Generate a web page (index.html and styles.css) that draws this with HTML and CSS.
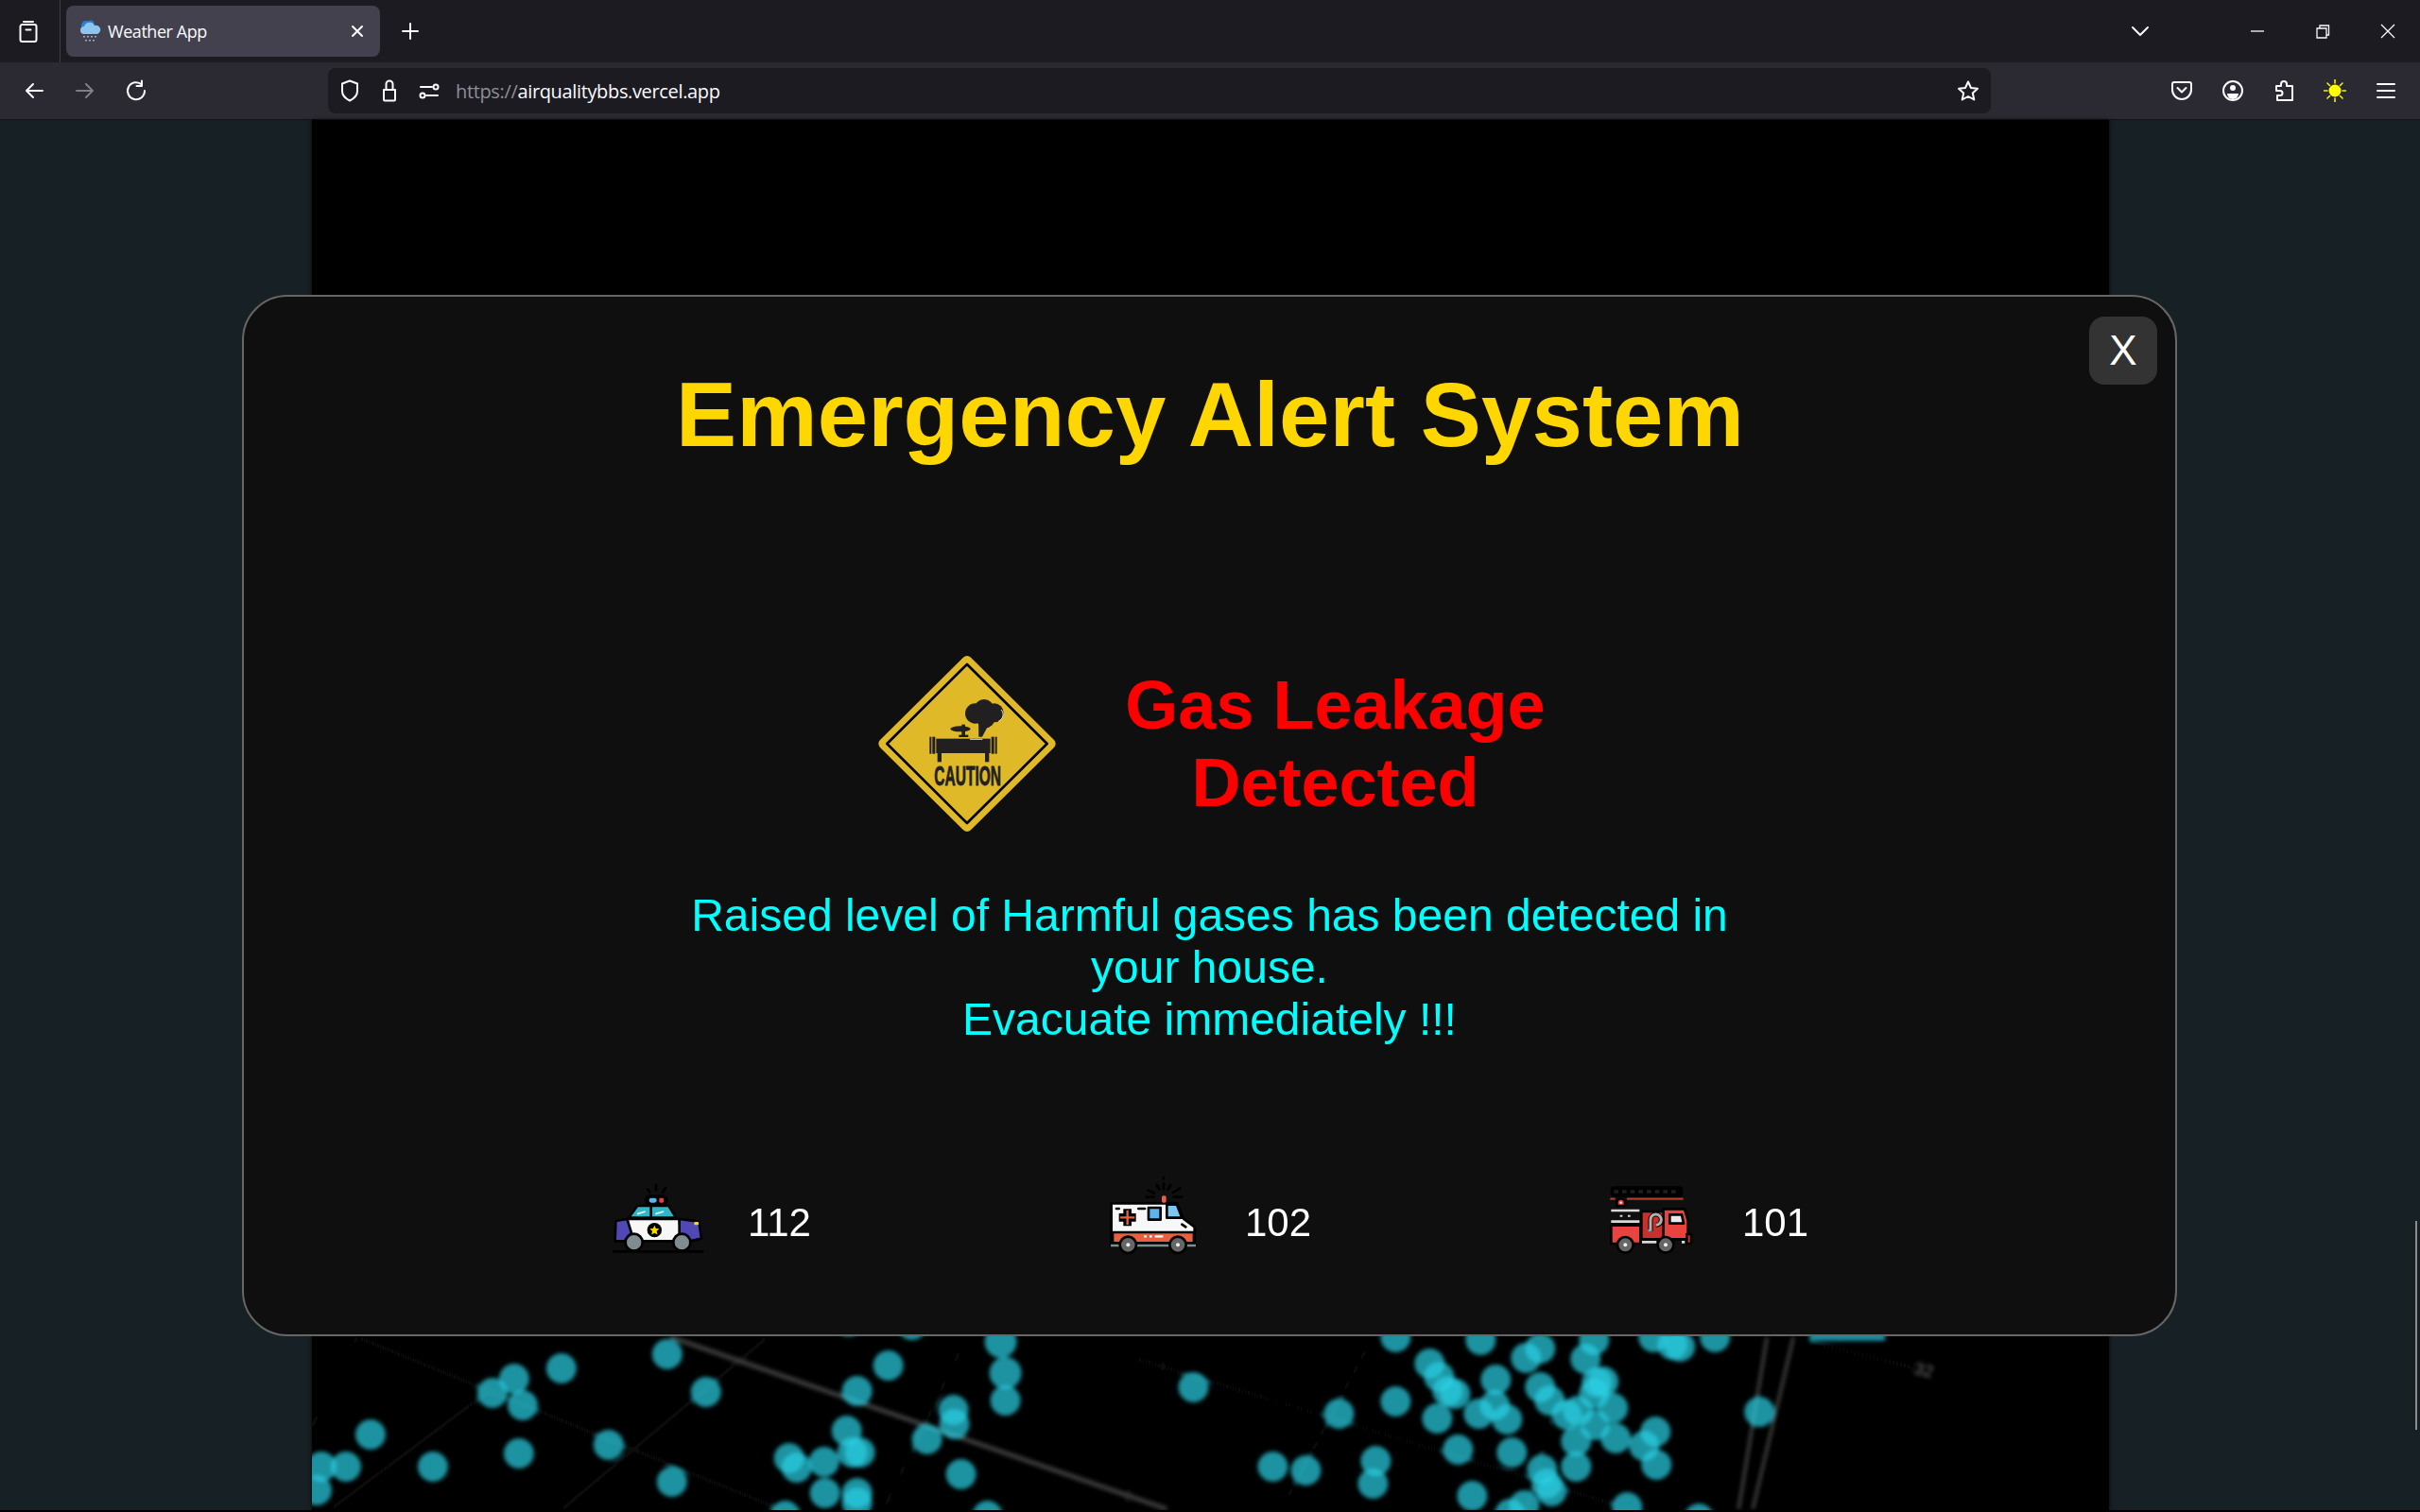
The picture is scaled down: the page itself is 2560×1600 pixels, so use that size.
FILE: index.html
```html
<!DOCTYPE html>
<html lang="en">
<head>
<meta charset="utf-8">
<title>Weather App</title>
<link rel="stylesheet" href="styles.css">
</head>
<body>
<div class="window">
  <header class="tabbar">
    <div class="slot-view">
      <svg class="ic" viewBox="0 0 24 24"><path d="M7 2h10M3.500 7a2 2 0 0 1 2-2h13a2 2 0 0 1 2 2v14a2 2 0 0 1-2 2h-13a2 2 0 0 1-2-2zM9.500 10.500h5"/></svg>
    </div>
    <div class="tab">
      <svg class="favicon" viewBox="0 0 24 24"><circle cx="8" cy="6" r="5" fill="#2b7fd4"/><circle cx="13" cy="4" r="3.500" fill="#2b7fd4"/><path d="M6 15a4 4 0 0 1 0-8 6 6 0 0 1 11-1 4.500 4.500 0 0 1 3 9z" fill="#8cc6ee"/><path d="M6 17v1.500M10 17v1.500M14 17v1.500M18 17v1.500M8 21v1.500M12 21v1.500M16 21v1.500" stroke="#b4d6ec" stroke-width="1.500" fill="none"/></svg>
      <span class="tab-title">Weather App</span>
      <svg class="ic ic-s tab-x" viewBox="0 0 16 16"><path d="M3 3l10 10M13 3L3 13"/></svg>
    </div>
    <div class="slot-plus">
      <svg class="ic ic-plus" viewBox="0 0 20 20"><path d="M10 2v16M2 10h16"/></svg>
    </div>
    <div class="tabbar-right">
      <svg class="ic ic-chev" viewBox="0 0 20 12"><path d="M2 2l8 8 8-8"/></svg>
      <div class="win-btn"><svg class="ic ic-win" viewBox="0 0 16 16"><path d="M1 8h14"/></svg></div>
      <div class="win-btn"><svg class="ic ic-win" viewBox="0 0 16 16"><path d="M2 5h10v10H2zM5 5V2h9.500v10H12"/></svg></div>
      <div class="win-btn"><svg class="ic ic-win" viewBox="0 0 16 16"><path d="M1 1l14 14M15 1L1 15"/></svg></div>
    </div>
  </header>

  <nav class="toolbar">
    <div class="tool"><svg class="ic" viewBox="0 0 24 24"><path d="M21 12H4M11 5l-7 7 7 7"/></svg></div>
    <div class="tool tool-off"><svg class="ic" viewBox="0 0 24 24"><path d="M3 12h17M13 5l7 7-7 7"/></svg></div>
    <div class="tool"><svg class="ic" viewBox="0 0 24 24"><path d="M18 5.500A9 9 0 1 0 21 12M18 1.500V7h-5.500"/></svg></div>
    <div class="urlbar">
      <div class="url-ic"><svg class="ic" viewBox="0 0 24 24"><path d="M12 1.500l8 3v8c0 5-4 8-8 10-4-2-8-5-8-10v-8z"/></svg></div>
      <div class="url-ic"><svg class="ic" viewBox="0 0 24 24"><path d="M6 11h12v10.500a1 1 0 0 1-1 1H7a1 1 0 0 1-1-1zM8.500 11V5a3.500 3.500 0 0 1 7 0v6"/></svg></div>
      <div class="url-ic"><svg class="ic" viewBox="0 0 24 24"><path d="M3 8h12M9 17h12"/><circle cx="19" cy="8" r="2.500"/><circle cx="5" cy="17" r="2.500"/></svg></div>
      <span class="url"><span class="url-dim">https://</span>airqualitybbs.vercel.app</span>
      <svg class="ic url-star" viewBox="0 0 24 24"><path d="M12 2.500l3 6.500 7 .8-5.200 4.700 1.500 7L12 18l-6.300 3.500 1.500-7L2 9.800 9 9z"/></svg>
    </div>
    <div class="tools-right">
      <div class="tool"><svg class="ic" viewBox="0 0 24 24"><path d="M4 3h16a2 2 0 0 1 2 2v6a10 10 0 0 1-20 0V5a2 2 0 0 1 2-2zM7.500 9l4.500 4.500L16.500 9"/></svg></div>
      <div class="tool"><svg class="ic" viewBox="0 0 24 24"><circle cx="12" cy="12" r="10"/><circle class="solid" cx="12" cy="9" r="3"/><path class="solid" d="M6 15h12a6 6 0 0 1-12 0z"/></svg></div>
      <div class="tool"><svg class="ic" viewBox="0 0 24 24"><path d="M4 7h5V5a3 3 0 0 1 6 0v2h6v15H5v-5h3a2.500 2.500 0 0 0 0-5H4z"/></svg></div>
      <div class="tool"><svg class="ic ic-sun" viewBox="0 0 24 24"><circle class="sun-core" cx="12" cy="12" r="6.500"/><path d="M12 0v4M12 20v4M0 12h4M20 12h4M4 4l2.500 2.500M20 4l-2.500 2.500M4 20l2.500-2.500M20 20l-2.500-2.500"/></svg></div>
      <div class="tool"><svg class="ic" viewBox="0 0 24 24"><path d="M3 5h18M3 12h18M3 19h18"/></svg></div>
    </div>
  </nav>

  <main class="page">
    <div class="panel">
      <svg class="map" viewBox="330 127 1902 1471" preserveAspectRatio="none">
        <defs><filter id="soft" x="-5%" y="-5%" width="110%" height="110%"><feGaussianBlur stdDeviation="2"/></filter></defs>
        <g filter="url(#soft)">
          <g class="road-faint">
            <path d="M378 1415L825 1597M330 1510L378 1415M520 1470L350 1597M812 1415L595 1597M1023 1415L935 1597M1239 1415L1190 1597M1450 1420L1356 1597M1200 1437L1712 1593M1915 1420L2024 1447M1640 1503L1616 1597"/>
          </g>
          <path class="road-main" d="M710 1415L1235 1597"/>
          <path class="road-side" d="M1870 1415L1840 1597M1898 1415L1855 1597"/>
          <rect class="strip" x="1915" y="1408" width="80" height="11"/>
          <text class="map-label" x="2026" y="1456" transform="rotate(14 2036 1450)">32</text>
          <g class="dots">
            <circle cx="706" cy="1433" r="16"/><circle cx="594" cy="1448" r="16"/><circle cx="544" cy="1459" r="16"/><circle cx="521" cy="1474" r="16"/><circle cx="553" cy="1487" r="16"/><circle cx="747" cy="1473" r="16"/><circle cx="392" cy="1518" r="16"/><circle cx="644" cy="1529" r="16"/><circle cx="549" cy="1538" r="16"/><circle cx="458" cy="1552" r="16"/><circle cx="366" cy="1552" r="16"/><circle cx="340" cy="1552" r="16"/><circle cx="335" cy="1577" r="16"/><circle cx="711" cy="1568" r="16"/><circle cx="940" cy="1445" r="16"/><circle cx="907" cy="1472" r="16"/><circle cx="1059" cy="1420" r="17"/><circle cx="1064" cy="1453" r="17"/><circle cx="1064" cy="1482" r="16"/><circle cx="1009" cy="1492" r="16"/><circle cx="1010" cy="1507" r="16"/><circle cx="981" cy="1523" r="16"/><circle cx="1017" cy="1560" r="16"/><circle cx="896" cy="1514" r="16"/><circle cx="910" cy="1537" r="16"/><circle cx="902" cy="1537" r="16"/><circle cx="872" cy="1547" r="16"/><circle cx="835" cy="1543" r="16"/><circle cx="843" cy="1553" r="16"/><circle cx="873" cy="1580" r="16"/><circle cx="907" cy="1580" r="16"/><circle cx="907" cy="1590" r="16"/><circle cx="831" cy="1604" r="16"/><circle cx="1045" cy="1604" r="16"/><circle cx="898" cy="1398" r="16"/><circle cx="965" cy="1402" r="16"/>
            <circle cx="1263" cy="1468" r="16"/><circle cx="1347" cy="1552" r="16"/><circle cx="1382" cy="1556" r="16"/>
            <circle cx="1477" cy="1415" r="16"/><circle cx="1567" cy="1418" r="16"/><circle cx="1615" cy="1437" r="16"/><circle cx="1630" cy="1427" r="16"/><circle cx="1513" cy="1443" r="16"/><circle cx="1523" cy="1457" r="16"/><circle cx="1532" cy="1472" r="16"/><circle cx="1540" cy="1475" r="16"/><circle cx="1477" cy="1483" r="16"/><circle cx="1417" cy="1496" r="16"/><circle cx="1521" cy="1501" r="16"/><circle cx="1583" cy="1460" r="16"/><circle cx="1565" cy="1496" r="16"/><circle cx="1582" cy="1487" r="16"/><circle cx="1595" cy="1502" r="16"/><circle cx="1630" cy="1468" r="16"/><circle cx="1640" cy="1482" r="16"/><circle cx="1658" cy="1497" r="16"/><circle cx="1678" cy="1438" r="16"/><circle cx="1687" cy="1418" r="16"/><circle cx="1690" cy="1463" r="16"/><circle cx="1697" cy="1462" r="16"/><circle cx="1687" cy="1475" r="16"/><circle cx="1707" cy="1490" r="16"/><circle cx="1670" cy="1493" r="16"/><circle cx="1688" cy="1508" r="16"/><circle cx="1668" cy="1525" r="16"/><circle cx="1668" cy="1552" r="16"/><circle cx="1710" cy="1522" r="16"/><circle cx="1752" cy="1515" r="16"/><circle cx="1740" cy="1530" r="16"/><circle cx="1753" cy="1550" r="16"/><circle cx="1862" cy="1494" r="16"/><circle cx="1543" cy="1534" r="16"/><circle cx="1600" cy="1537" r="16"/><circle cx="1456" cy="1546" r="16"/><circle cx="1453" cy="1570" r="16"/><circle cx="1632" cy="1555" r="16"/><circle cx="1637" cy="1570" r="16"/><circle cx="1642" cy="1578" r="16"/><circle cx="1558" cy="1583" r="16"/><circle cx="1613" cy="1593" r="16"/><circle cx="1598" cy="1602" r="16"/><circle cx="1722" cy="1595" r="16"/><circle cx="1798" cy="1607" r="16"/><circle cx="1770" cy="1423" r="16"/><circle cx="1778" cy="1425" r="16"/><circle cx="1815" cy="1415" r="16"/><circle cx="1750" cy="1415" r="16"/>
          </g>
        </g>
      </svg>
    </div>
    <div class="scrollthumb"></div>

    <section class="modal">
      <button class="close">X</button>
      <h1 class="title">Emergency Alert System</h1>
      <div class="alert">
        <svg class="sign" viewBox="60 48 600 600">
          <path class="sign-plate" d="M366 86L630 348 366 610 102 348z"/>
          <path class="sign-line" d="M366 96L620 348 366 600 112 348z"/>
          <g class="sign-ink">
            <rect x="268" y="332" width="172" height="46"/>
            <rect x="247" y="326" width="6" height="54"/><rect x="256" y="326" width="9" height="54"/>
            <rect x="443" y="326" width="9" height="54"/><rect x="455" y="326" width="6" height="54"/>
            <rect x="272" y="378" width="13" height="28"/><rect x="423" y="378" width="13" height="28"/>
            <ellipse cx="345" cy="301" rx="32" ry="9"/>
            <rect x="349" y="287" width="11" height="38"/><rect x="340" y="320" width="30" height="7"/>
            <circle cx="392" cy="252" r="32"/><circle cx="420" cy="238" r="31"/><circle cx="452" cy="250" r="30"/><circle cx="425" cy="270" r="28"/>
            <path d="M402 270h40l-14 30-14 26h-11z"/>
            <text class="sign-text" x="262" y="481" textLength="212" lengthAdjust="spacingAndGlyphs">CAUTION</text>
          </g>
          <path class="sign-glint" d="M474 240a22 22 0 0 1-8 36M375 334h40"/>
        </svg>
        <h2 class="alert-text">Gas Leakage Detected</h2>
      </div>
      <p class="message">Raised level of Harmful gases has been detected in your house.<br>Evacuate immediately !!!</p>
      <div class="contacts">
        <div class="contact">
          <svg class="vehicle" viewBox="45 30 300 300">
            <g class="veh-line">
              <path class="thin" d="M165 85l7 10M192 72v16M222 82l-9 13M58 283h282"/>
              <rect class="k" x="160" y="107" width="66" height="28" rx="12"/>
              <path class="teal" d="M105 176L133 138H232L256 176z"/>
              <path class="thin" d="M176 138v38"/>
              <path class="white" d="M100 180H266L272 250H118z"/>
              <path class="violet" d="M64 186l36-6 14 44-22 26H62z"/>
              <path class="violet" d="M266 180l62 8 8 54-36 8-34-24z"/>
            </g>
            <rect class="sky" x="170" y="113" width="24" height="15" rx="7"/>
            <rect class="red" x="202" y="113" width="14" height="15" rx="4"/>
            <path class="shine" d="M132 164l26-8M190 164l26-8"/>
            <circle class="k-fill" cx="187" cy="215" r="23"/>
            <path class="gold" d="M187 200l4.500 10 10.500 1-8 7.500 2.500 11-9.500-5.500-9.500 5.500 2.500-11-8-7.500 10.500-1z"/>
            <rect class="gold" x="313" y="189" width="14" height="10" rx="3"/>
            <g class="veh-line"><circle class="grey" cx="122" cy="254" r="27"/><circle class="grey" cx="274" cy="254" r="27"/></g>
          </svg>
          <span class="phone">112</span>
        </div>
        <div class="contact">
          <svg class="vehicle" viewBox="60 30 300 300">
            <g class="veh-line">
              <path class="thin" d="M240 48v4M240 68v17M218 72l8 13M262 72l-8 13M190 88l20 10M292 82l-22 14M185 110h25M272 110h26"/>
              <path class="white" d="M74 130H282L304 180 338 205V255H74z"/>
              <path class="orange" d="M78 222H336V256H78z"/>
              <path class="sky-l" d="M250 134H282L298 176H250z"/>
              <rect class="sky" x="192" y="144" width="38" height="38"/>
              <path class="thin" d="M90 147h8M160 147h20M298 197l12 8M72 264h270"/>
            </g>
            <path class="cross-o" d="M112 148h26v14h14v26h-14v14h-26v-14H98v-26h14z"/>
            <path class="cross" d="M125 152v46M102 175h46"/>
            <path class="band" d="M178 235h8M195 235h8M212 235h26"/>
            <path class="road-g" d="M72 264h270"/>
            <rect class="orange-s" x="234" y="106" width="14" height="22" rx="5"/>
            <g class="veh-line"><circle class="dark-g" cx="127" cy="262" r="26"/><circle class="dark-g" cx="285" cy="262" r="26"/></g>
            <circle class="hub" cx="127" cy="262" r="6"/><circle class="hub" cx="285" cy="262" r="6"/>
          </svg>
          <span class="phone">102</span>
        </div>
        <div class="contact">
          <svg class="vehicle" viewBox="50 30 300 300">
            <g class="veh-line">
              <rect class="k" x="74" y="80" width="222" height="26" rx="8"/>
              <path class="thin-red" d="M72 116h10M125 116H298"/>
              <path class="fire" d="M90 138v-10a13 13 0 0 1 26 0v10z"/>
              <path class="thin-w" d="M72 153h90M72 188h90"/>
              <path class="fire" d="M72 200H165V258H72z"/>
              <path class="fire-d" d="M168 156H240V244H168z"/>
              <path class="fire" d="M238 148H305L316 184V244H238z"/>
              <path class="pale" d="M258 166H296L302 194H258z"/>
              <path class="fire-d" d="M312 228h14v30h-14z"/>
            </g>
            <circle class="hub" cx="103" cy="128" r="3.500"/>
            <path class="dots-w" d="M100 170h10M125 170h10"/>
            <path class="rungs" d="M88 88v10M114 88v10M140 88v10M166 88v10M192 88v10M218 88v10M244 88v10M270 88v10"/>
            <path class="hose-k" d="M197 218V182a17 17 0 0 1 34 0 17 17 0 0 1-17 17"/>
            <path class="hose" d="M197 218V182a17 17 0 0 1 34 0 17 17 0 0 1-17 17"/>
            <circle class="sky" cx="193" cy="216" r="4"/>
            <path class="thin-w" d="M170 253h46M296 253h10"/>
            <g class="veh-line"><circle class="dark-g" cx="117" cy="262" r="25"/><circle class="dark-g" cx="245" cy="262" r="25"/></g>
            <circle class="hub" cx="117" cy="262" r="6"/><circle class="hub" cx="245" cy="262" r="6"/>
          </svg>
          <span class="phone">101</span>
        </div>
      </div>
    </section>
  </main>
  <div class="edge"></div>
</div>
</body>
</html>
```

FILE: styles.css
```css
* { box-sizing: border-box; }
html, body { margin: 0; height: 100%; background: #000; overflow: hidden; }
body { font-family: "Liberation Sans", Arial, sans-serif; color: #fff; }
.window { height: 1600px; display: flex; flex-direction: column; }

/* browser chrome */
.ic { width: 24px; height: 24px; fill: none; stroke: #fbfbfe; stroke-width: 2; stroke-linecap: round; stroke-linejoin: round; display: block; flex: none; }
.ic-s { width: 16px; height: 16px; }
.ic-plus { width: 20px; height: 20px; }
.ic-chev { width: 20px; height: 12px; }
.ic-win { width: 16px; height: 16px; stroke-width: 1.300; stroke-linecap: butt; stroke-linejoin: miter; }
.ic-sun { stroke: #f5f000; stroke-width: 1.600; }
.sun-core { fill: #ffff00; stroke: none; }
.solid { fill: #fbfbfe; stroke: none; }

.tabbar { height: 66px; background: #1c1b22; display: flex; align-items: center; flex: none; }
.slot-view { width: 64px; height: 66px; border-right: 1px solid #3f3e46; padding-left: 18px; display: flex; align-items: center; }
.tab { margin-left: 6px; width: 332px; height: 54px; background: #42414d; border-radius: 8px; display: flex; align-items: center; padding: 0 16px 0 13px; }
.favicon { width: 24px; height: 26px; flex: none; }
.tab-title { margin-left: 7px; flex: 1; font: 18px/24px "Open Sans", sans-serif; letter-spacing: -0.45px; color: #fbfbfe; }
.slot-plus { margin-left: 22px; width: 20px; }
.tabbar-right { margin-left: auto; display: flex; align-items: center; }
.tabbar-right .ic-chev { margin-right: 79px; }
.win-btn { width: 69px; display: flex; justify-content: center; }

.toolbar { height: 60px; background: #2b2a33; display: flex; align-items: center; padding-left: 9px; flex: none; }
.tool { width: 54px; display: flex; justify-content: center; flex: none; }
.tool-off .ic { opacity: .4; }
.urlbar { margin-left: 176px; width: 1759px; height: 48px; background: #1c1b22; border-radius: 8px; display: flex; align-items: center; padding-left: 2px; flex: none; }
.url-ic { width: 42px; display: flex; justify-content: center; flex: none; }
.url { margin-left: 7px; padding-top: 2px; flex: 1; font: 20px/26px "Open Sans", sans-serif; letter-spacing: -0.35px; color: #fbfbfe; }
.url-dim { color: #8f8f96; }
.url-star { margin-right: 12px; }
.tools-right { margin-left: 175px; display: flex; }

/* page behind the dialog */
.page { position: relative; flex: 1; border-top: 1px solid #111116; background: #172024; }
.panel { width: 1901px; height: 100%; margin-left: 330px; background: #000; box-shadow: 0 0 4px rgba(0,0,0,.8); }
.map { display: block; width: 100%; height: 100%; }
.road-faint path { fill: none; stroke: #101010; stroke-width: 3; }
.road-main { fill: none; stroke: #3e3e3e; stroke-width: 5; }
.road-side { fill: none; stroke: #4a4a4a; stroke-width: 3; }
.strip { fill: #1c8c9e; }
.map-label { fill: #6e6e6e; font-size: 18px; }
.dots circle { fill: #2ad0e4; opacity: .7; }
.scrollthumb { position: absolute; right: 3px; top: 1165px; width: 2px; height: 221px; background: #8c8c8c; }
.edge { height: 2px; background: #000; flex: none; }

/* dialog */
.modal { position: absolute; left: 256px; top: 185px; width: 2047px; height: 1102px; background: #0f0f0f; border: 2px solid #666; border-radius: 48px; padding-top: 70px; display: flex; flex-direction: column; align-items: center; }
.close { position: absolute; top: 21px; right: 19px; width: 72px; height: 72px; border: 0; border-radius: 16px; background: #333; color: #fff; font: 44px/72px "Liberation Sans", sans-serif; padding: 0; }
.title { margin: 0 0 0 1px; font-size: 96px; line-height: 110px; font-weight: 700; color: #ffd700; letter-spacing: .1px; }
.alert { margin-top: 193px; width: 720px; display: flex; align-items: center; gap: 65px; padding-left: 1px; }
.sign { width: 200px; height: 200px; flex: none; }
.sign-plate { fill: #e0b928; stroke: #e0b928; stroke-width: 34; stroke-linejoin: round; }
.sign-line { fill: none; stroke: #000; stroke-width: 8; stroke-linejoin: round; }
.sign-ink { fill: #221f20; }
.sign-text { font-family: "Liberation Sans Narrow", "Liberation Sans", sans-serif; font-weight: 700; font-size: 86px; stroke: #221f20; stroke-width: 2.500; }
.sign-glint { fill: none; stroke: #ddd; stroke-width: 3; }
.alert-text { margin: 0; flex: 1; font-size: 72px; line-height: 82px; font-weight: 700; color: #f00; text-align: center; }
.message { margin: 54px 0 0; width: 1110px; font-size: 48px; line-height: 55px; color: #00ffff; text-align: center; }
.contacts { margin-top: 134px; align-self: flex-start; padding-left: 387px; display: flex; }
.contact { width: 526px; display: flex; align-items: center; gap: 46px; }
.vehicle { width: 100px; height: 100px; flex: none; }
.phone { font-size: 42px; line-height: 50px; padding-top: 8px; color: #fff; }

/* vehicle artwork */
.veh-line path, .veh-line circle, .veh-line rect { stroke: #000; stroke-width: 8; stroke-linejoin: round; stroke-linecap: round; }
.thin { fill: none; }
.k { fill: #000; }
.k-fill { fill: #000; }
.teal { fill: #2fb6c8; }
.white { fill: #f7f7f7; }
.violet { fill: #5049b5; }
.sky { fill: #5cb4ea; }
.sky-l { fill: #7cc8f0; }
.red { fill: #e8403a; }
.gold { fill: #fad700; }
.grey { fill: #7f8c92; }
.shine { fill: none; stroke: #e8f4f8; stroke-width: 5; }
.orange { fill: #e9603f; }
.orange-s { fill: #e9603f; }
.cross-o { fill: #000; }
.cross { fill: none; stroke: #e9603f; stroke-width: 7; }
.band { fill: none; stroke: #fff; stroke-width: 7; }
.road-g { fill: none; stroke: #7f8c92; stroke-width: 8; }
.dark-g { fill: #666; }
.hub { fill: #f0f0f0; }
.fire { fill: #e8433f; }
.fire-d { fill: #c9302c; }
.pale { fill: #e8e8ee; }
.veh-line .thin-red { fill: none; stroke: #b03a30; stroke-width: 7; }
.thin-w, .veh-line .thin-w { fill: none; stroke: #d8d8d8; stroke-width: 8; stroke-linecap: butt; }
.dots-w { fill: none; stroke: #d8d8d8; stroke-width: 6; stroke-dasharray: 8 4; }
.rungs { fill: none; stroke: #1f1f1f; stroke-width: 14; }
.hose-k { fill: none; stroke: #000; stroke-width: 15; }
.hose { fill: none; stroke: #b0b0b0; stroke-width: 9; }
```
